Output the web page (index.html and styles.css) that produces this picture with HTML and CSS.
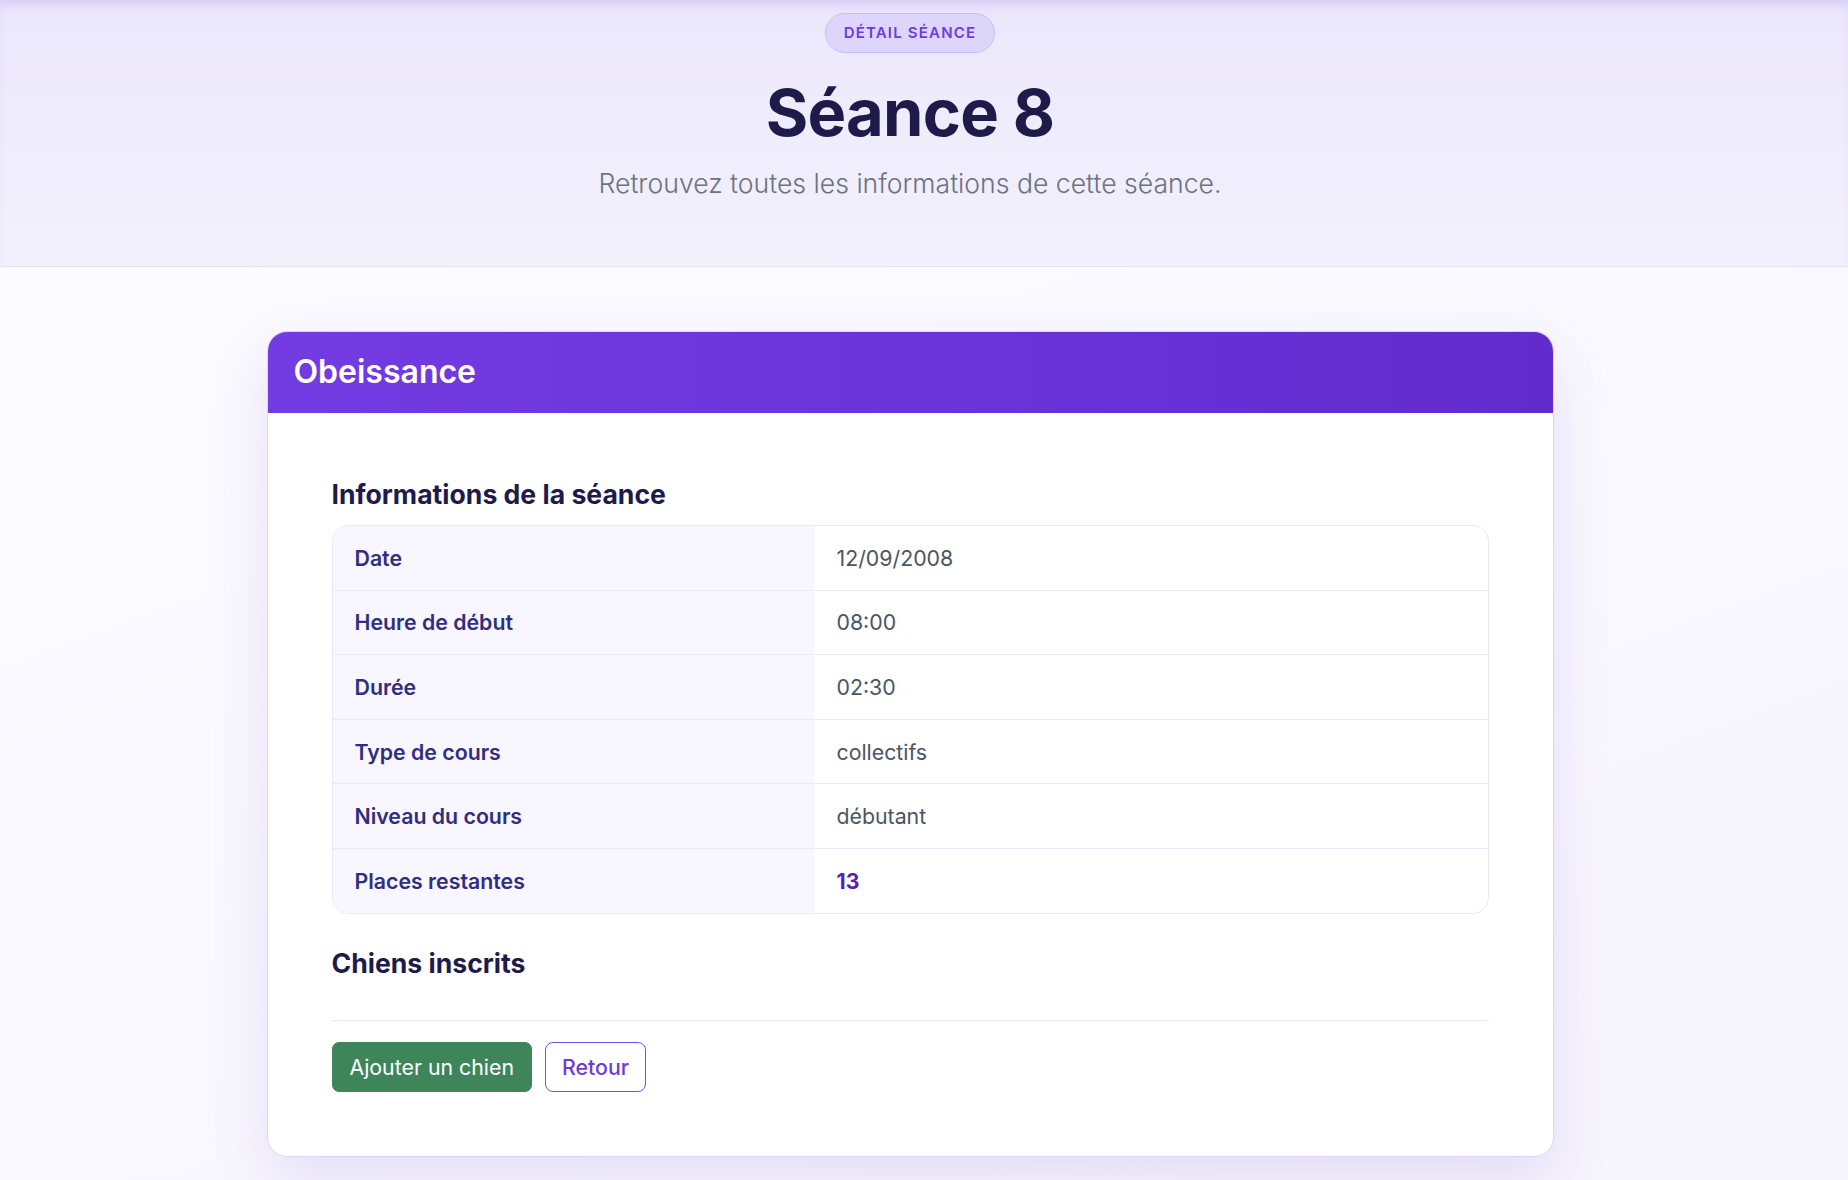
FILE: index.html
```html
<!DOCTYPE html>
<html lang="fr">
<head>
    <meta charset="UTF-8">
    <meta name="viewport" content="width=device-width, initial-scale=1.0">
    <title>Séance 8</title>
    <link rel="stylesheet" href="styles.css">
</head>
<body>

    <header class="hero">
        <div class="hero-inner">
            <span class="badge">Détail séance</span>
            <h1>Séance 8</h1>
            <p class="subtitle">Retrouvez toutes les informations de cette séance.</p>
        </div>
    </header>

    <main class="page">
        <section class="card">
            <div class="card-header">
                <h2>Obeissance</h2>
            </div>

            <div class="card-body">
                <h3 class="section-title">Informations de la séance</h3>

                <div class="table-wrap">
                    <table class="info-table">
                        <tr>
                            <th>Date</th>
                            <td>12/09/2008</td>
                        </tr>
                        <tr>
                            <th>Heure de début</th>
                            <td>08:00</td>
                        </tr>
                        <tr>
                            <th>Durée</th>
                            <td>02:30</td>
                        </tr>
                        <tr>
                            <th>Type de cours</th>
                            <td>collectifs</td>
                        </tr>
                        <tr>
                            <th>Niveau du cours</th>
                            <td>débutant</td>
                        </tr>
                        <tr>
                            <th>Places restantes</th>
                            <td class="places">13</td>
                        </tr>
                    </table>
                </div>

                <h3 class="section-title dogs-title">Chiens inscrits</h3>

                <div class="actions">
                    <a href="#" class="btn btn-green">Ajouter un chien</a>
                    <a href="#" class="btn btn-outline">Retour</a>
                </div>
            </div>
        </section>
    </main>

</body>
</html>
```

FILE: styles.css
```css
html {
    background: #faf9fe;
}

body {
    margin: 0;
    font-family: 'Inter', 'Noto Sans', sans-serif;
    background: linear-gradient(160deg, #fcfbff 0%, #f9f8fe 60%, #f6f4fd 100%);
    color: #1e1b4b;
    min-height: 100vh;
}

/* Hero */
.hero {
    background: linear-gradient(180deg, #ebe7fb 0%, #f3f1fd 100%);
    border-bottom: 1px solid #e4e0f6;
    box-shadow: inset 0 10px 14px -8px rgba(124, 92, 230, 0.25);
    padding: 13px 28px 63px 0;
    text-align: center;
}

.badge {
    display: inline-block;
    padding: 9px 18px;
    font-size: 15px;
    line-height: 20px;
    font-weight: 600;
    letter-spacing: 0.08em;
    text-transform: uppercase;
    color: #6c3ce1;
    background-color: #ddd5fa;
    border: 1px solid #c9bcf6;
    border-radius: 999px;
}

.hero h1 {
    margin: 24px 0 15px;
    font-size: 65px;
    line-height: 72px;
    font-weight: 700;
    letter-spacing: -0.012em;
    color: #1e1b4b;
}

.subtitle {
    margin: 0;
    font-size: 26.6px;
    line-height: 39px;
    font-weight: 300;
    color: #6b7280;
}

/* Card */
.page {
    padding: 64px 28px 0 0;
}

.card {
    width: 1287px;
    box-sizing: border-box;
    margin: 0 auto;
    background-color: #ffffff;
    border: 1px solid #ddd6fb;
    border-radius: 20px;
    overflow: hidden;
    box-shadow: 0 24px 60px rgba(91, 52, 200, 0.12);
}

.card-header {
    background: linear-gradient(90deg, #723ce2 0%, #6a33d9 55%, #622bcc 100%);
    padding: 21px 26px 22px;
}

.card-header h2 {
    margin: 0;
    font-size: 32px;
    line-height: 38px;
    font-weight: 600;
    color: #ffffff;
}

.card-body {
    padding: 64px;
}

.section-title {
    margin: 0 0 14px;
    font-size: 26.6px;
    line-height: 34px;
    font-weight: 700;
    color: #1e1b4b;
}

.dogs-title {
    margin-top: 32px;
    margin-bottom: 0;
}

/* Table */
.table-wrap {
    border: 1px solid #ece8fc;
    border-radius: 16px;
    overflow: hidden;
}

.info-table {
    width: 100%;
    border-collapse: collapse;
    font-size: 21.3px;
}

.info-table th,
.info-table td {
    padding: 16.8px 22px;
    line-height: 30px;
    text-align: left;
    border-bottom: 1px solid #ece8fc;
}

.info-table tr:last-child th,
.info-table tr:last-child td {
    border-bottom: none;
}

.info-table th {
    width: 438px;
    background-color: #f8f6fe;
    font-weight: 600;
    color: #312e81;
}

.info-table td {
    font-weight: 400;
    color: #4b5563;
}

.info-table td.places {
    font-weight: 700;
    color: #5b21b6;
}

/* Actions */
.actions {
    margin-top: 40px;
    padding-top: 21px;
    border-top: 1px solid #e8e4fc;
    display: flex;
    gap: 13px;
}

.btn {
    display: inline-block;
    padding: 9px 17px;
    font-size: 21.3px;
    line-height: 30px;
    text-decoration: none;
    border-radius: 7px;
    border: 1px solid transparent;
}

.btn-green {
    background-color: #3e8659;
    border-color: #3e8659;
    color: #ffffff;
}

.btn-outline {
    padding: 9px 16px;
    background-color: #ffffff;
    border-color: #7c4dec;
    color: #6d3be0;
    font-weight: 500;
    border-radius: 8px;
}
```
